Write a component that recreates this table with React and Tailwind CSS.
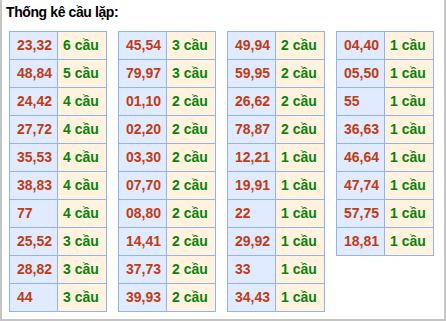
import React from 'react';

const tables = [
    [['23,32', 6], ['48,84', 5], ['24,42', 4], ['27,72', 4], ['35,53', 4], ['38,83', 4], ['77', 4], ['25,52', 3], ['28,82', 3], ['44', 3]],
    [['45,54', 3], ['79,97', 3], ['01,10', 2], ['02,20', 2], ['03,30', 2], ['07,70', 2], ['08,80', 2], ['14,41', 2], ['37,73', 2], ['39,93', 2]],
    [['49,94', 2], ['59,95', 2], ['26,62', 2], ['78,87', 2], ['12,21', 1], ['19,91', 1], ['22', 1], ['29,92', 1], ['33', 1], ['34,43', 1]],
    [['04,40', 1], ['05,50', 1], ['55', 1], ['36,63', 1], ['46,64', 1], ['47,74', 1], ['57,75', 1], ['18,81', 1]],
];

const StatTable = ({ rows }) => (
    <table className="border-collapse w-[97px] table-fixed">
        <tbody>
            {rows.map(([pair, count]) => (
                <tr key={pair} className="h-[28px]">
                    <td className="w-[48px] border border-[#8fb4ee] bg-[#e0ebff] pl-[7px] text-[#bd3d16]">{pair}</td>
                    <td className="w-[49px] border border-[#8fb4ee] bg-[#fff3e0] pl-[5px] text-[#0a820c] whitespace-nowrap">{count} cầu</td>
                </tr>
            ))}
        </tbody>
    </table>
);

export default function App() {
    return (
        <div className="w-[446px] h-[321px] bg-white border-2 border-t-0 border-[#c4c4c4] font-['Liberation_Sans',Arial,sans-serif] font-bold text-[14px]">
            <h1 className="text-[14px] leading-[18px] pl-[4px] pt-[3px] tracking-[-0.4px] text-black">Thống kê cầu lặp:</h1>
            <div className="flex items-start gap-[11px] pl-[7px] pt-[10px]">
                {tables.map((rows, i) => (
                    <StatTable key={i} rows={rows} />
                ))}
            </div>
        </div>
    );
}
